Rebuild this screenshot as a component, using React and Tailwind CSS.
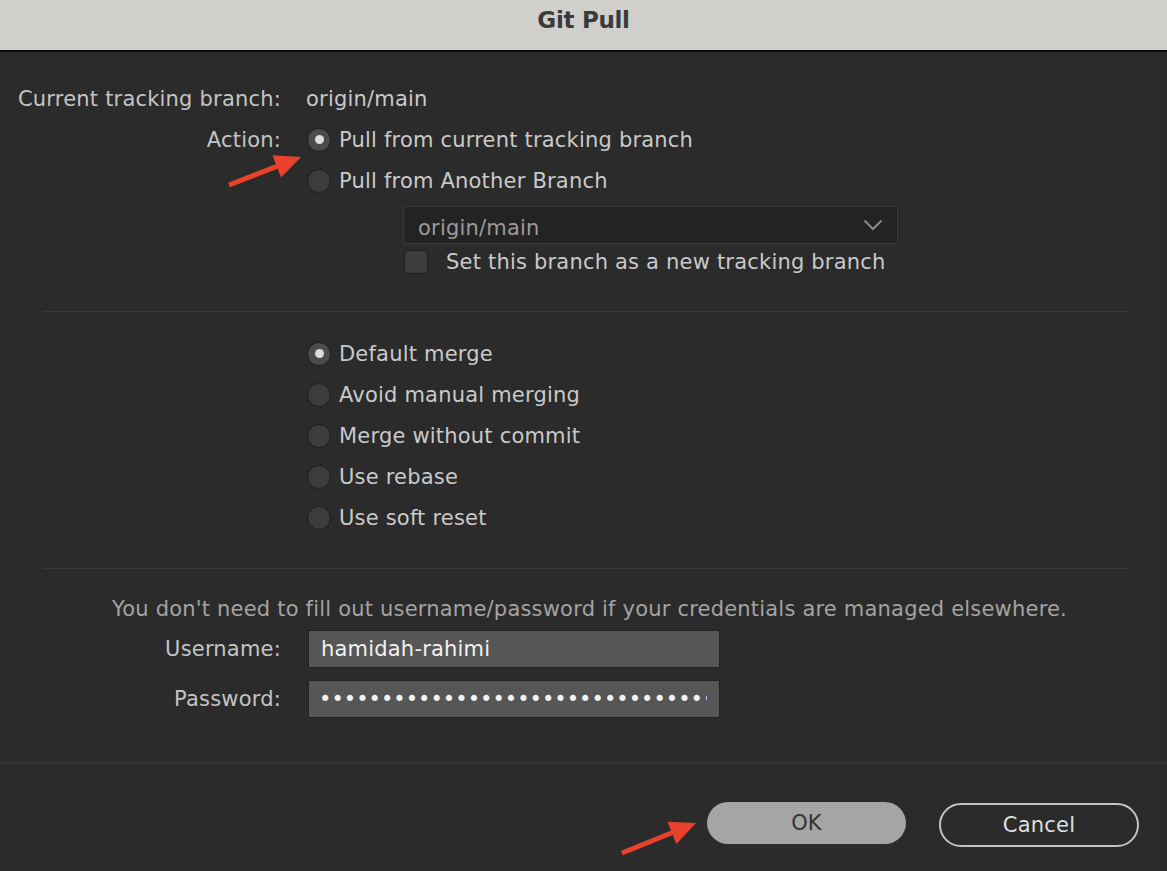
import React from "react";

const font = { fontFamily: '"DejaVu Sans", "Noto Sans", sans-serif' };

function Radio({ checked }) {
  return (
    <span
      className={`flex h-[24px] w-[24px] shrink-0 items-center justify-center rounded-full border-[1.5px] border-[#1c1c1c] ${
        checked ? "bg-[#4c4c4c]" : "bg-[#3c3c3c]"
      }`}
    >
      {checked && <span className="h-[9px] w-[9px] rounded-full bg-[#dcdcdc]" />}
    </span>
  );
}

function RadioRow({ checked, label, h = "h-[41px]" }) {
  return (
    <div className={`flex ${h} items-center`}>
      <div className="ml-[1px] flex items-center gap-[8px]">
        <Radio checked={checked} />
        <span className="text-[#c9c9c9]">{label}</span>
      </div>
    </div>
  );
}

function Arrow({ x1, y1, x2, y2 }) {
  const dx = x2 - x1;
  const dy = y2 - y1;
  const len = Math.sqrt(dx * dx + dy * dy);
  const ux = dx / len;
  const uy = dy / len;
  const headLen = 26;
  const headW = 12;
  const bx = x2 - ux * headLen;
  const by = y2 - uy * headLen;
  const px = -uy;
  const py = ux;
  const pts = `${x2},${y2} ${bx + px * headW},${by + py * headW} ${bx - px * headW},${by - py * headW}`;
  return (
    <g>
      <line x1={x1} y1={y1} x2={bx + ux * 4} y2={by + uy * 4} stroke="#e8412c" strokeWidth="5" strokeLinecap="butt" />
      <polygon points={pts} fill="#e8412c" />
    </g>
  );
}

export default function App() {
  const dots = "•".repeat(33);
  return (
    <div className="relative h-[871px] w-[1167px] overflow-hidden bg-[#2b2b2b] text-[21px] leading-[24px] tracking-[0.2px]" style={font}>
      {/* Title bar */}
      <div className="flex h-[50px] items-center justify-center bg-[#d0cfcc] pb-[10px]">
        <span className="text-[23px] font-bold tracking-[-0.3px] text-[#3a3a3a]" style={font}>
          Git Pull
        </span>
      </div>
      <div className="h-[2px] bg-[#0e0e0e]" />

      {/* Section 1 */}
      <div className="grid grid-cols-[281px_1fr] gap-x-[25px] pt-[27px]">
        <div className="flex h-[40px] items-center justify-end text-[#c4c4c4]">Current tracking branch:</div>
        <div className="flex h-[40px] items-center text-[#c9c9c9]">origin/main</div>

        <div className="flex h-[41px] items-center justify-end text-[#c4c4c4]">Action:</div>
        <RadioRow checked label="Pull from current tracking branch" />

        <div />
        <RadioRow label="Pull from Another Branch" h="h-[42px]" />

        <div />
        <div className="pl-[97px]">
          <div className="mt-[4px] flex h-[38px] w-[495px] items-center justify-between border border-[#3a3a3a] bg-[#232323] pl-[14px] pr-[14px] pt-[5px]">
            <span className="text-[#9a9a9a]">origin/main</span>
            <svg width="20" height="12" viewBox="0 0 20 12" fill="none" className="mb-[5px]">
              <path d="M1.5 1.5 L10 10 L18.5 1.5" stroke="#8a8a8a" strokeWidth="2" />
            </svg>
          </div>
          <div className="mt-[5px] flex h-[24px] items-center gap-[18px] pl-[1px] pt-[1px]">
            <span className="h-[24px] w-[24px] rounded-[5px] border-[1.5px] border-[#1c1c1c] bg-[#3d3d3d]" />
            <span className="text-[#c9c9c9]">Set this branch as a new tracking branch</span>
          </div>
        </div>
      </div>

      <div className="ml-[43px] mr-[40px] mt-[38px] h-[1px] bg-[#3a3a3a]" />

      {/* Section 2 */}
      <div className="grid grid-cols-[281px_1fr] gap-x-[25px] pt-[21px]">
        <div />
        <div className="flex flex-col">
          <RadioRow checked label="Default merge" />
          <RadioRow label="Avoid manual merging" />
          <RadioRow label="Merge without commit" />
          <RadioRow label="Use rebase" />
          <RadioRow label="Use soft reset" />
        </div>
      </div>

      <div className="ml-[43px] mr-[40px] mt-[30px] h-[1px] bg-[#3a3a3a]" />

      {/* Section 3 */}
      <div className="mt-[28px] pl-[12px] text-center text-[#a3a3a3]">
        You don't need to fill out username/password if your credentials are managed elsewhere.
      </div>
      <div className="mt-[9px] grid grid-cols-[281px_1fr] gap-x-[27px] gap-y-[12px]">
        <div className="flex h-[38px] items-center justify-end text-[#c4c4c4]">Username:</div>
        <div className="flex h-[38px] w-[412px] items-center border-[1.5px] border-[#222] bg-[#565656] pl-[12px] text-[#f2f2f2]">
          hamidah-rahimi
        </div>
        <div className="flex h-[38px] items-center justify-end text-[#c4c4c4]">Password:</div>
        <div className="flex h-[38px] w-[412px] items-center border-[1.5px] border-[#222] bg-[#565656] pl-[10px] text-[#f2f2f2]">
          <span className="block w-[388px] overflow-hidden whitespace-nowrap tracking-[0px]">{dots}</span>
        </div>
      </div>

      <div className="mt-[44px] h-[2px] bg-[#353535]" />

      {/* Buttons */}
      <div className="flex items-start justify-end gap-[33px] pr-[28px] pt-[38px]">
        <button className="flex h-[42px] w-[199px] items-center justify-center rounded-full bg-[#a5a5a5] text-[#333]" style={font}>
          OK
        </button>
        <button className="mt-[1px] flex h-[44px] w-[200px] items-center justify-center rounded-full border-2 border-[#c4c4c4] text-[#dedede]" style={font}>
          Cancel
        </button>
      </div>

      {/* Annotation arrows */}
      <svg className="pointer-events-none absolute left-0 top-0" width="1167" height="871">
        <Arrow x1={229} y1={185} x2={301} y2={157} />
        <Arrow x1={622} y1={853} x2={696} y2={823} />
      </svg>
    </div>
  );
}
